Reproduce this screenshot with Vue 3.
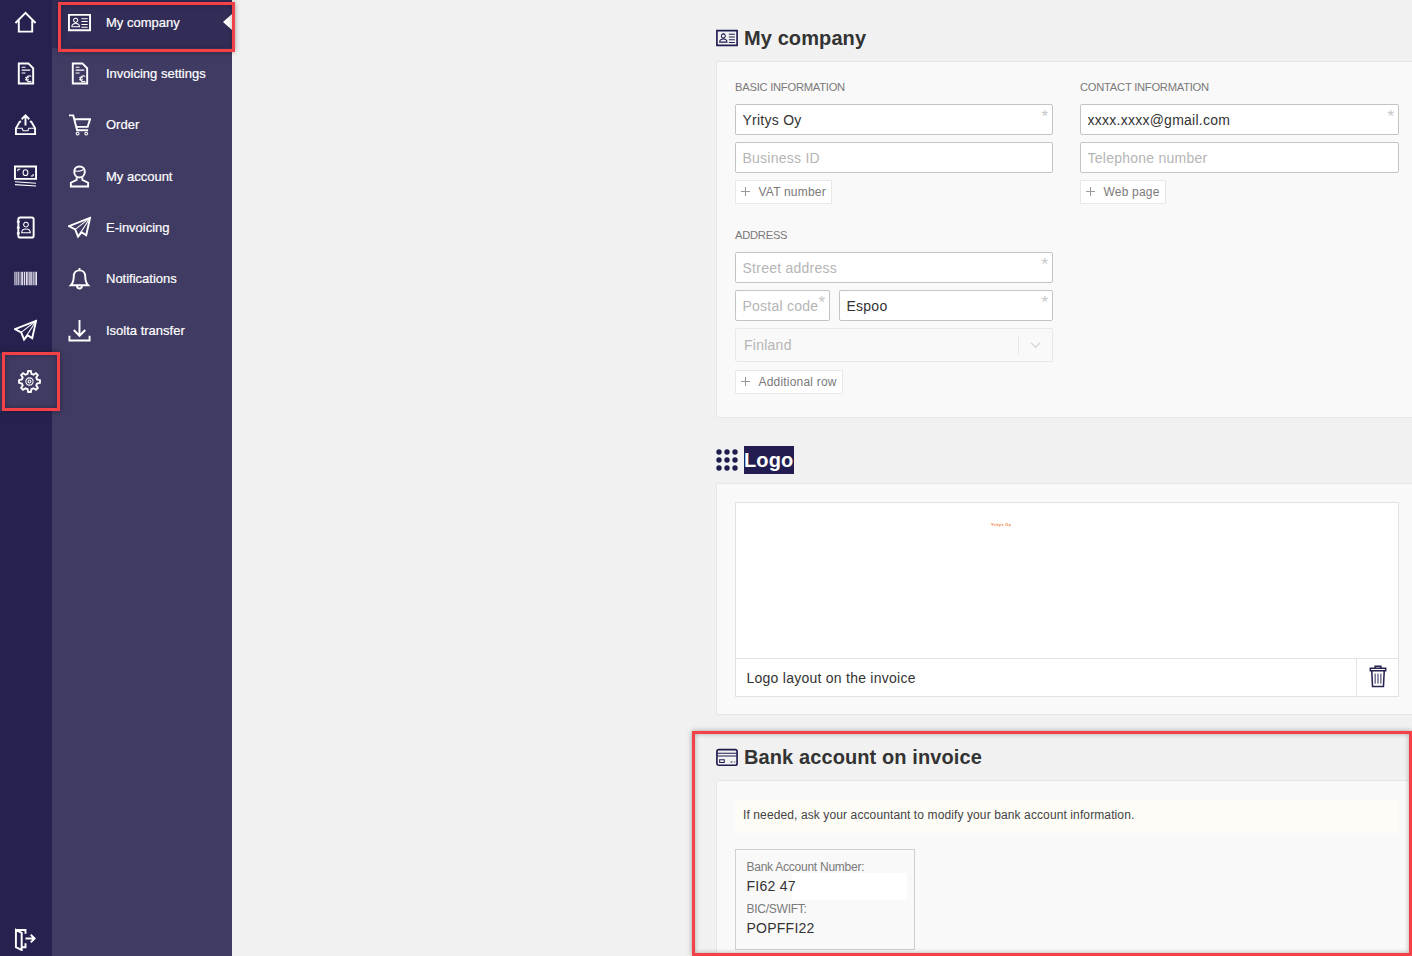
<template>
  <div class="page">
    <!-- icon rail -->
    <aside class="rail">
      <ul class="rail-list">
        <li v-for="item in railItems" :key="item" class="rail-item" :class="{ active: item === 'gear' }">
          <svg class="icon" :class="`icon-${item}`" viewBox="0 0 24 24">
            <path v-for="(d, i) in icons[item]" :key="i" :d="d" :class="{ fine: i }" />
          </svg>
        </li>
      </ul>
      <div class="rail-exit">
        <svg class="icon" viewBox="0 0 24 24"><path v-for="d in icons.exit" :key="d" :d="d" /></svg>
      </div>
    </aside>

    <!-- settings sub menu -->
    <nav class="subnav">
      <a v-for="link in links" :key="link.label" class="subnav-item" :class="{ active: link.active }">
        <svg class="icon" viewBox="0 0 24 24">
          <path v-for="(d, i) in icons[link.icon]" :key="i" :d="d" :class="{ fine: i }" />
        </svg>
        <span>{{ link.label }}</span>
      </a>
    </nav>

    <main class="main">
      <section class="section">
        <h2 class="title">
          <svg class="title-icon" viewBox="0 0 24 24">
            <path v-for="(d, i) in icons.idcard" :key="i" :d="d" :class="{ fine: i }" />
          </svg>
          <span>My company</span>
        </h2>
        <div class="card">
          <div class="columns">
            <div class="column">
              <h4 class="label">BASIC INFORMATION</h4>
              <div class="field required"><input value="Yritys Oy" /></div>
              <div class="field"><input placeholder="Business ID" /></div>
              <button class="add"><svg viewBox="0 0 9 9"><path d="M4.500 0v9M0 4.500h9" /></svg>VAT number</button>
            </div>
            <div class="column">
              <h4 class="label">CONTACT INFORMATION</h4>
              <div class="field required"><input value="xxxx.xxxx@gmail.com" /></div>
              <div class="field"><input placeholder="Telephone number" /></div>
              <button class="add"><svg viewBox="0 0 9 9"><path d="M4.500 0v9M0 4.500h9" /></svg>Web page</button>
            </div>
          </div>
          <div class="address">
            <h4 class="label">ADDRESS</h4>
            <div class="field required"><input placeholder="Street address" /></div>
            <div class="row">
              <div class="field required postal"><input placeholder="Postal code" /></div>
              <div class="field required city"><input value="Espoo" /></div>
            </div>
            <div class="select">
              <span class="select-value">Finland</span>
              <span class="select-arrow">
                <svg viewBox="0 0 12 8"><path d="M1 1.500l5 5 5-5" /></svg>
              </span>
            </div>
            <button class="add"><svg viewBox="0 0 9 9"><path d="M4.500 0v9M0 4.500h9" /></svg>Additional row</button>
          </div>
        </div>
      </section>

      <section class="section">
        <h2 class="title">
          <svg class="title-icon dots" viewBox="0 0 22 22">
            <template v-for="y in [3, 11, 19]" :key="y">
              <circle v-for="x in [3, 11, 19]" :key="x" :cx="x" :cy="y" r="2.7" />
            </template>
          </svg>
          <span class="selected">Logo</span>
        </h2>
        <div class="card">
          <div class="logo-box">
            <div class="logo-preview"><span class="logo-mark">Yritys Oy</span></div>
            <div class="logo-caption">
              <span>Logo layout on the invoice</span>
              <div class="logo-trash">
                <svg viewBox="0 0 20 24">
                  <path d="M7 3V1.200h6V3M2 3.500h16v2.500H2zM3.500 6l.8 16.500h11.400L16.500 6" />
                  <path class="fine" d="M7 9v10.500M10 9v10.500M13 9v10.500" />
                </svg>
              </div>
            </div>
          </div>
        </div>
      </section>

      <section class="section">
        <h2 class="title">
          <svg class="title-icon" viewBox="0 0 24 24">
            <path v-for="(d, i) in icons.bank" :key="i" :d="d" :class="{ fine: i }" />
          </svg>
          <span>Bank account on invoice</span>
        </h2>
        <div class="card">
          <p class="notice">If needed, ask your accountant to modify your bank account information.</p>
          <div class="bank-box">
            <div class="bank-label">Bank Account Number:</div>
            <div class="bank-value">FI62 47</div>
            <div class="bank-label second">BIC/SWIFT:</div>
            <div class="bank-value">POPFFI22</div>
            <div class="bank-mask"></div>
          </div>
        </div>
      </section>
    </main>

    <!-- red annotation frames drawn on top of the screenshot -->
    <div class="mark mark-company"></div>
    <div class="mark mark-gear"></div>
    <div class="mark mark-bank"></div>
  </div>
</template>

<script setup>
// gear outline, 8 teeth round the centre of a 24 box
const gearPath = () => {
  const pts = [];
  const teeth = 8;
  for (let i = 0; i < teeth; i++) {
    const a = (i / teeth) * Math.PI * 2;
    const step = (Math.PI * 2) / teeth;
    const add = (r, t) => pts.push(`${(12 + r * Math.cos(t)).toFixed(2)} ${(12 + r * Math.sin(t)).toFixed(2)}`);
    add(8.2, a - step * 0.32);
    add(11, a - step * 0.16);
    add(11, a + step * 0.16);
    add(8.2, a + step * 0.32);
  }
  return `M${pts.join("L")}Z`;
};
const ring = (r) => `M${12 - r} 12a${r} ${r} 0 1 0 ${r * 2} 0a${r} ${r} 0 1 0 ${-r * 2} 0`;

// first path is the outline, the rest are drawn with the thin stroke
const icons = {
  home: ["M1.500 12.500L12 2l10.500 10.500M5 10v11.500h14V10"],
  invoice: [
    "M5 1.500h10l5 5v16H5z",
    "M8 5.500h4M8 8.500h9M8 11.500h4M18 15c-3-1.500-5 .5-5 2.500s2 4 5 2.500M11.500 16.500h4M11.500 18.500h4",
  ],
  tray: ["M12 13V2.500M8 6.500l4-4 4 4M7.500 9H6l-4 7v6h20v-6l-4-7h-1.500", "M2 16h6.500l1 2.500h5l1-2.500H22"],
  money: [
    "M1 1.500h22v13H1z",
    "M4 4.500h2.500M4 4.500v2M20 11.500h-2.500M20 11.500v-2M12 5c-1.500 0-2.500 1.300-2.500 3s1 3 2.500 3 2.500-1.300 2.500-3-1-3-2.500-3zM1 17.500l22 1.500M1 20.500l22 1.500",
  ],
  book: [
    "M6.500 1.500h12a2 2 0 0 1 2 2v17a2 2 0 0 1-2 2h-12a2 2 0 0 1-2-2v-17a2 2 0 0 1 2-2zM3 6h3M3 12h3M3 18h3",
    "M12.500 6.500a2.500 2.500 0 1 0 .01 0zM8 17.500c0-3 2-4 4.500-4s4.500 1 4.500 4z",
  ],
  barcode: [
    "",
    "M1 5v14M3 5v14M5 5v14M7.500 5v14M9 5v14M11 5v14M13 5v14M14.500 5v14M16.500 5v14M18 5v14M20 5v14M22 5v14M23.500 5v14",
  ],
  plane: ["M23 2L1 10.500l6.500 3.500 3 7.500 3.500-4.500 5 3z", "M23 2L7.500 14M23 2L10.500 21.500"],
  gear: [gearPath(), ring(3.8) + ring(1.5)],
  exit: ["M2 2h10v4M12 16v4H8M2 2l6 3v18l-6-3zM12 11h9M17.500 7l4 4-4 4"],
  idcard: [
    "M1 4h22v16H1z",
    "M8 7.500a2.200 2.200 0 1 0 .01 0zM4 16.500c0-2.500 1.700-3.500 4-3.500s4 1 4 3.500zM14 8h6.500M14 11h6.500M14 14h6.500M14 17h6.500",
  ],
  cart: ["M1 2.500h4.500L9.500 18H21M6.500 6.500H23l-2.500 8H8.500", "M10 20a1.500 1.500 0 1 0 .01 0zM19 20a1.500 1.500 0 1 0 .01 0z"],
  user: [
    "M12 1.500c-3.500 0-5.500 2.500-5.500 5.500s2 6 5.500 6 5.500-3 5.500-6-2-5.500-5.500-5.500zM9 13v2.500L3 18.500v4h18v-4l-6-3V13",
    "M6.500 6c3 1 8 .5 9.500-1.500",
  ],
  bell: ["M12 1v2.500M12 3.500c-3.500 0-6 2.500-6 6.500 0 5-1 7-3 9h18c-2-2-3-4-3-9 0-4-2.500-6.500-6-6.500zM9.500 19.500c0 2 1 3 2.500 3s2.500-1 2.500-3"],
  download: ["M12 1v16M6 11.500l6 6 6-6M1.500 17.500v5h21v-5"],
  bank: ["M1 6a2 2 0 0 1 2-2h18a2 2 0 0 1 2 2v13a2 2 0 0 1-2 2H3a2 2 0 0 1-2-2z", "M1 8h22M1 11h22M4 15h5v3H4zM16 17.500h2M20 17.500h1"],
};

const railItems = ["home", "invoice", "tray", "money", "book", "barcode", "plane", "gear"];

const links = [
  { label: "My company", icon: "idcard", active: true },
  { label: "Invoicing settings", icon: "invoice" },
  { label: "Order", icon: "cart" },
  { label: "My account", icon: "user" },
  { label: "E-invoicing", icon: "plane" },
  { label: "Notifications", icon: "bell" },
  { label: "Isolta transfer", icon: "download" },
];
</script>

<style>
body {
  overflow: hidden;
}
</style>

<style scoped>
.page {
  position: relative;
  display: flex;
  height: 956px;
  overflow: hidden;
  background: #f1f1f1;
  font-family: "Liberation Sans", Arial, sans-serif;
  color: #333;
}

.rail {
  display: flex;
  flex-direction: column;
  flex: none;
  width: 52px;
  background: #26224f;
}
.rail-list,
.subnav {
  display: flex;
  flex-direction: column;
  gap: 7.4px;
  margin: 0;
  padding: 0;
  list-style: none;
}
.rail-item {
  display: flex;
  align-items: center;
  justify-content: center;
  height: 44px;
  padding-right: 2px;
}
.rail-item.active {
  padding-right: 0;
  padding-left: 7px;
  background: #3f3b62;
  box-shadow: 0 0 0 7px #3f3b62;
}
.rail-exit {
  display: flex;
  justify-content: center;
  margin-top: auto;
  padding: 0 2px 5px 0;
}
.icon {
  flex: none;
  width: 23px;
  height: 23px;
  fill: none;
  stroke: #fff;
  stroke-width: 2;
}
.icon .fine {
  stroke-width: 1.100;
}
.icon-barcode .fine {
  stroke: #e4e0ee;
  stroke-width: 1.200;
}

.subnav {
  flex: none;
  width: 180px;
  background: #3f3b62;
}
.subnav-item {
  display: flex;
  align-items: center;
  gap: 15px;
  height: 44px;
  padding-left: 16px;
  font-size: 13px;
  color: #fff;
  -webkit-text-stroke: 0.2px #fff;
}
.subnav-item.active {
  position: relative;
  background: #322d57;
  box-shadow: 0 4px 0 #322d57;
}
.subnav-item.active::after {
  content: "";
  position: absolute;
  top: 14px;
  right: 0;
  border-style: solid;
  border-width: 8px 9px 8px 0;
  border-color: transparent #fff transparent transparent;
}

.main {
  flex: 1;
  min-width: 0;
  padding-left: 484px;
}
.section {
  width: 702px;
  padding-top: 24px;
}
.section + .section {
  padding-top: 28px;
}
.title {
  display: flex;
  align-items: center;
  gap: 6px;
  height: 28px;
  margin: 0 0 9px;
  font-size: 20px;
  font-weight: 700;
  letter-spacing: 0.1px;
  color: #333;
  white-space: nowrap;
}
.title-icon {
  flex: none;
  width: 22px;
  height: 22px;
  fill: none;
  stroke: #1f1c50;
  stroke-width: 1.800;
}
.title-icon .fine {
  stroke-width: 1.100;
}
.title-icon.dots {
  fill: #1f1c50;
  stroke: none;
}
.selected {
  display: block;
  padding-right: 1px;
  line-height: 28px;
  background: #211d50;
  color: #fff;
}

.card {
  padding: 18px 18px 17px;
  background: #f9f9f9;
  border: 1px solid #e6e6e6;
  border-radius: 2px;
}
.columns {
  display: grid;
  grid-template-columns: 318px 319px;
  gap: 27px;
}
.column,
.address {
  display: flex;
  flex-direction: column;
  align-items: flex-start;
  gap: 7px;
}
.address {
  width: 318px;
  margin-top: 24px;
  padding-bottom: 6px;
}
.label {
  height: 14px;
  margin: 0 0 3px;
  font-size: 11.200px;
  font-weight: 400;
  line-height: 14px;
  letter-spacing: -0.25px;
  color: #7a7a7a;
}
.field {
  position: relative;
  width: 100%;
  height: 31px;
}
.field input {
  display: block;
  box-sizing: border-box;
  width: 100%;
  height: 100%;
  padding: 0 6.500px;
  background: #fff;
  border: 1px solid #c4c4c4;
  border-radius: 2px;
  outline: none;
  font-family: inherit;
  font-size: 14px;
  letter-spacing: 0.25px;
  color: #333;
}
.field input::placeholder {
  color: #b5b5b5;
  opacity: 1;
}
.field.required::after {
  content: "*";
  position: absolute;
  top: 5px;
  right: 5px;
  font-size: 17px;
  line-height: 15px;
  color: #c8c8c8;
}
.row {
  display: flex;
  gap: 9px;
  width: 100%;
}
.postal {
  flex: none;
  width: 95px;
}
.city {
  flex: 1;
}
.select {
  display: flex;
  align-items: center;
  box-sizing: border-box;
  width: 100%;
  height: 34px;
  background: #f9f9f9;
  border: 1px solid #e8e8e8;
  border-radius: 2px;
}
.select-value {
  flex: 1;
  padding-left: 8px;
  font-size: 14px;
  letter-spacing: 0.25px;
  color: #b5b5b5;
}
.select-arrow {
  display: flex;
  align-items: center;
  justify-content: center;
  width: 33px;
  height: 18px;
  border-left: 1px solid #e8e8e8;
}
.select-arrow svg {
  width: 11px;
  height: 8px;
  fill: none;
  stroke: #d8d8d8;
  stroke-width: 1.5;
}
.add {
  display: flex;
  align-items: center;
  gap: 8.500px;
  box-sizing: border-box;
  height: 24px;
  padding: 0 5px;
  background: #fff;
  border: 1px solid #e8e8e8;
  border-radius: 1px;
  font-family: inherit;
  font-size: 12px;
  letter-spacing: 0.2px;
  color: #7a7a7a;
}
.add svg {
  flex: none;
  width: 9px;
  height: 9px;
  margin-top: -1px;
  fill: none;
  stroke: #999;
  stroke-width: 1;
}
.address .add {
  margin-top: 1px;
}

.logo-box {
  background: #fff;
  border: 1px solid #e2e2e2;
}
.logo-preview {
  box-sizing: border-box;
  height: 156px;
  padding: 19px 0 0 255px;
  border-bottom: 1px solid #e2e2e2;
}
.logo-mark {
  display: block;
  font-size: 4px;
  font-weight: 700;
  line-height: 6px;
  letter-spacing: 0.3px;
  color: #f0772f;
  white-space: nowrap;
}
.logo-caption {
  display: flex;
  align-items: center;
  justify-content: space-between;
  height: 37px;
  padding-left: 10.500px;
  font-size: 14px;
  letter-spacing: 0.25px;
}
.logo-trash {
  display: flex;
  align-items: center;
  justify-content: center;
  width: 41px;
  height: 100%;
  border-left: 1px solid #e2e2e2;
}
.logo-trash svg {
  width: 20px;
  height: 23px;
  margin-top: -2px;
  fill: none;
  stroke: #26224f;
  stroke-width: 1.600;
}
.logo-trash .fine {
  stroke-width: 1;
}

.notice {
  height: 33px;
  margin: 1px 0 16px;
  padding-left: 8px;
  background: #fdfcf6;
  font-size: 12px;
  line-height: 31px;
  letter-spacing: 0.11px;
  color: #444;
}
.bank-box {
  position: relative;
  box-sizing: border-box;
  width: 180px;
  height: 101px;
  padding: 10px 10.500px 0;
  border: 1px solid #cfcfcf;
}
.bank-label {
  position: relative;
  z-index: 1;
  height: 15px;
  font-size: 12px;
  line-height: 15px;
  letter-spacing: -0.25px;
  color: #7a7a7a;
}
.bank-label.second {
  margin-top: 6px;
}
.bank-value {
  position: relative;
  z-index: 1;
  height: 21px;
  font-size: 14px;
  line-height: 22px;
  letter-spacing: 0.25px;
}
.bank-mask {
  position: absolute;
  top: 23px;
  left: 56px;
  width: 115px;
  height: 27px;
  background: #fff;
}

.mark {
  position: absolute;
  box-sizing: border-box;
  border: 3px solid #f44147;
  box-shadow: 0 0 5px rgba(0, 0, 0, 0.35), inset 0 0 5px rgba(0, 0, 0, 0.3);
  pointer-events: none;
}
.mark-company {
  top: 2px;
  left: 58px;
  width: 177px;
  height: 50px;
}
.mark-gear {
  top: 352px;
  left: 2px;
  width: 58px;
  height: 59px;
}
.mark-bank {
  top: 731px;
  left: 692px;
  width: 720px;
  height: 225px;
}
</style>
